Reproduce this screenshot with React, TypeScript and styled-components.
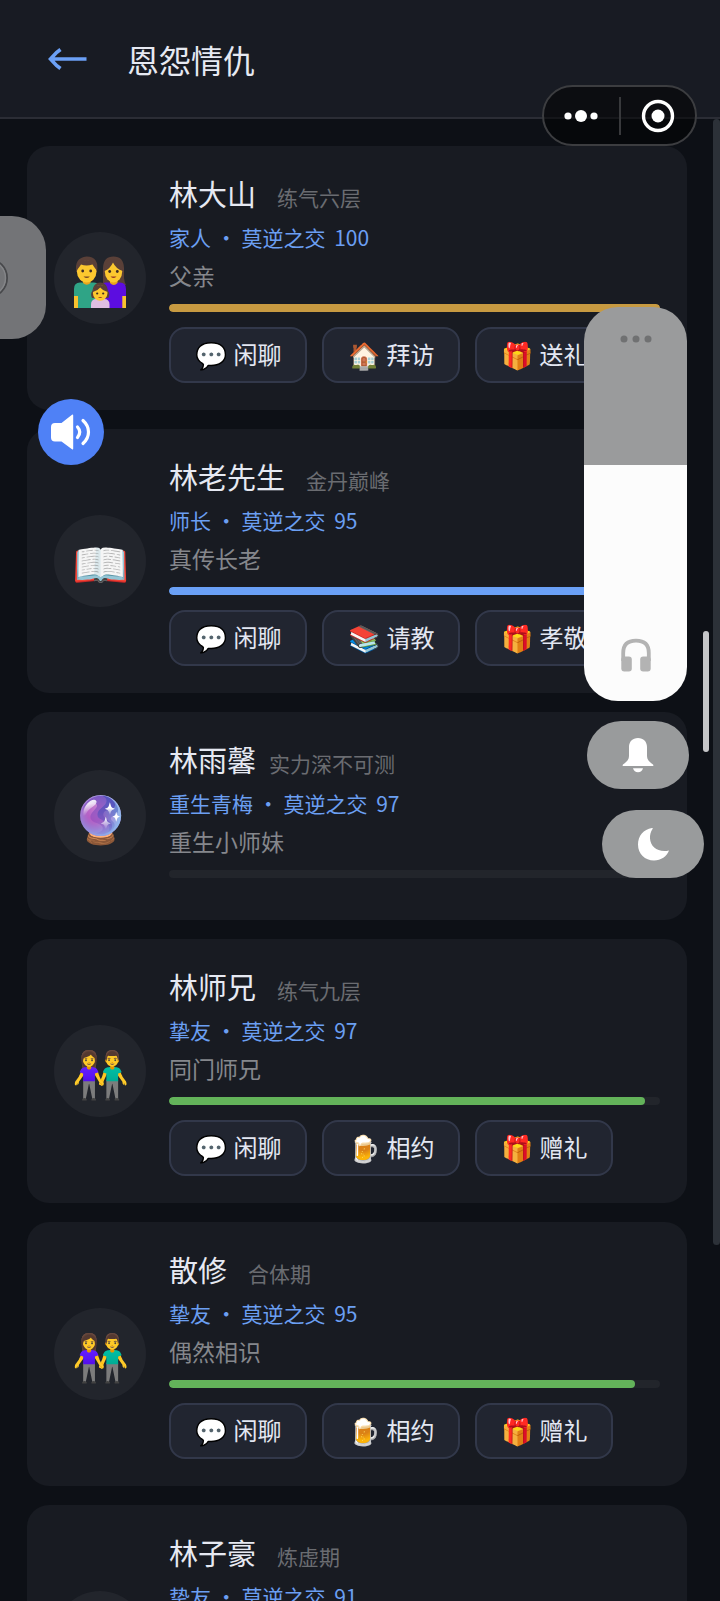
import React, { useState } from "react";
import styled, { createGlobalStyle } from "styled-components";

const GlobalStyle = createGlobalStyle`
  * { box-sizing: border-box; }
  body {
    margin: 0;
    background: #0d1016;
    font-family: "Noto Sans CJK SC", "Noto Sans", sans-serif;
  }
  button { font-family: inherit; padding: 0; border: 0; cursor: pointer; }
`;

const Screen = styled.div`
  position: relative;
  display: flex;
  flex-direction: column;
  height: 100vh;
  overflow: hidden;
  background: #0d1016;
  color: #e6e9f2;
`;

const Header = styled.header`
  display: flex;
  align-items: center;
  gap: 39px;
  flex: none;
  height: 119px;
  padding: 0 48px;
  background: #181b23;
  border-bottom: 2px solid #2b2d35;
`;

const BackButton = styled.button`
  display: flex;
  background: none;
`;

const Title = styled.h1`
  margin: 0;
  font-size: 32px;
  line-height: 40px;
  font-weight: 400;
`;

const Body = styled.main`
  display: flex;
  flex: 1;
  min-height: 0;
`;

const List = styled.ul`
  display: flex;
  flex: 1;
  flex-direction: column;
  gap: 19px;
  margin: 0;
  padding: 27px 26px 27px 27px;
  list-style: none;
  overflow-y: auto;
  scrollbar-width: none;
`;

const ScrollTrack = styled.div`
  flex: none;
  width: 7px;
`;

const ScrollThumb = styled.div`
  height: 76%;
  border-radius: 4px;
  background: #2c3138;
`;

const Card = styled.li`
  display: flex;
  flex: none;
  align-items: center;
  gap: 23px;
  padding: 27px;
  border-radius: 22px;
  background: #181b22;
`;

const Avatar = styled.div`
  display: flex;
  flex: none;
  align-items: center;
  justify-content: center;
  width: 92px;
  height: 92px;
  border-radius: 50%;
  background: #22252c;
  font-size: 46px;
  line-height: 52px;
`;

const Info = styled.div`
  flex: 1;
  min-width: 0;
`;

const NameRow = styled.div<{ $tight?: boolean }>`
  display: flex;
  align-items: baseline;
  gap: ${(p) => (p.$tight ? 13 : 21)}px;
  height: 44px;
  line-height: 40px;
`;

const Name = styled.h2`
  margin: 0;
  font-size: 29px;
  font-weight: 400;
`;

const Rank = styled.span`
  font-size: 21px;
  color: #6a6c71;
`;

const Relation = styled.p`
  margin: 0;
  font-size: 21px;
  line-height: 40px;
  color: #6b9ff2;
`;

const Score = styled.span`
  margin-left: 4px;
`;

const Role = styled.p`
  margin: 0;
  font-size: 23px;
  line-height: 36px;
  color: #85878c;
`;

const Meter = styled.div`
  height: 8px;
  margin-top: 11px;
  border-radius: 4px;
  background: #22252b;
  overflow: hidden;
`;

const MeterFill = styled.div<{ $color: string }>`
  height: 100%;
  border-radius: 4px;
  background: ${(p) => p.$color};
`;

const Actions = styled.div`
  display: flex;
  gap: 15px;
  margin-top: 15px;
`;

const ActionButton = styled.button`
  display: flex;
  align-items: center;
  justify-content: center;
  gap: 7px;
  width: 138px;
  height: 56px;
  padding-bottom: 2px;
  border: 2px solid #32384a;
  border-radius: 16px;
  background: #212530;
  color: #e3e7f2;
  font-size: 24px;
  line-height: 32px;
  white-space: nowrap;
`;

const ActionIcon = styled.span`
  font-size: 26px;
`;

const Capsule = styled.div`
  position: absolute;
  top: 85px;
  right: 23px;
  display: flex;
  align-items: center;
  width: 155px;
  height: 61px;
  border: 2px solid #3c3d40;
  border-radius: 31px;
  background: rgba(0, 0, 0, 0.5);
`;

const CapsuleButton = styled.button`
  display: flex;
  flex: 1;
  align-items: center;
  justify-content: center;
  height: 100%;
  background: none;
`;

const CapsuleDivider = styled.span`
  width: 2px;
  height: 38px;
  background: #38393c;
`;

const EdgeHandle = styled.button`
  position: absolute;
  top: 216px;
  left: 0;
  width: 46px;
  height: 123px;
  border-radius: 0 34px 34px 0;
  background: #737477;
  overflow: hidden;
`;

const SpeakerButton = styled.button`
  position: absolute;
  top: 399px;
  left: 38px;
  display: flex;
  width: 66px;
  height: 66px;
  border-radius: 50%;
  background: #4f81f6;
`;

const VolumePanel = styled.div`
  position: absolute;
  top: 307px;
  right: 33px;
  display: flex;
  flex-direction: column;
  align-items: center;
  justify-content: space-between;
  width: 103px;
  height: 394px;
  padding: 28px 0 29px;
  border-radius: 34px;
  overflow: hidden;
`;

const VolumeSlider = styled.input`
  position: absolute;
  inset: 0;
  width: 100%;
  height: 100%;
  margin: 0;
  appearance: none;
  writing-mode: vertical-lr;
  direction: rtl;
  &::-webkit-slider-thumb {
    appearance: none;
    width: 1px;
    height: 1px;
  }
`;

const PanelIcon = styled.svg`
  position: relative;
  pointer-events: none;
`;

const PillButton = styled.button<{ $top: number; $right: number }>`
  position: absolute;
  top: ${(p) => p.$top}px;
  right: ${(p) => p.$right}px;
  display: flex;
  align-items: center;
  justify-content: center;
  width: 102px;
  height: 68px;
  border-radius: 34px;
  background: #999b9c;
`;

const PageIndicator = styled.div`
  position: absolute;
  top: 631px;
  right: 11px;
  width: 6px;
  height: 121px;
  border-radius: 3px;
  background: #c5c6c8;
`;

function FamilyIcon() {
  return (
    <svg width="52" height="60" viewBox="0 -8 52 60" role="img" aria-label="家人">
      {/* father */}
      <path d="M0 52V33q0-6.500 6-6.500h14q6 0 6 6.500v19z" fill="#2fa486" />
      <path d="M0 40h4v12H0z" fill="#f9c22e" />
      <path d="M9 21h7.500v6q-3.700 3.500-7.500 0z" fill="#e8a41c" />
      <path d="M2.300 16Q0 2 12.600.6 25.500 1 23 16z" fill="#5a4038" />
      <ellipse cx="12.700" cy="15.500" rx="9.800" ry="11" fill="#fcc82f" />
      <path d="M3 14Q2 4 12.700 4 23.300 4 22.400 14 20 11 18.500 8.500q-6 2-11.500 0Q5.500 11 3 14z" fill="#5a4038" />
      <circle cx="8.700" cy="15" r="1.400" fill="#3e2c26" />
      <circle cx="16.700" cy="15" r="1.400" fill="#3e2c26" />
      <path d="M9.500 20.500q3.200 3 6.400 0z" fill="#7a4a22" />
      {/* mother */}
      <path d="M29 26V12Q29.500.600 39.500.600 49.500.600 50 12v10q.6 5 2 7H29z" fill="#5a4038" />
      <path d="M26 52V33q0-6.500 6-6.500h14q6 0 6 6.500v19z" fill="#5c0de0" />
      <path d="M48.300 40h3.700v12h-3.700z" fill="#f9c22e" />
      <path d="M36 22h7.500v5q-3.700 4-7.500 0z" fill="#e8a41c" />
      <ellipse cx="39.500" cy="15.500" rx="8.700" ry="11" fill="#fcc82f" />
      <path d="M30.500 15Q30.500 3 39.500 3T48.800 15Q42 13 39 6.500 36 13 30.500 15z" fill="#5a4038" />
      <circle cx="35.700" cy="15.500" r="1.400" fill="#3e2c26" />
      <circle cx="43.300" cy="15.500" r="1.400" fill="#3e2c26" />
      <path d="M36.500 20.500q3 3 6 0z" fill="#9a3a22" />
      {/* child */}
      <path d="M17 52v-3.500Q17 43 22.500 43h7.500q5.500 0 5.500 5.500V52z" fill="#dfbfe2" />
      <path d="M18 42q-2-4 .3-7Q19.500 26.500 26.300 26.500T34 35q2.500 3 .3 7z" fill="#5a4038" />
      <ellipse cx="26.200" cy="37" rx="7.300" ry="7.700" fill="#fcc82f" />
      <path d="M18.800 36Q19 29 26.200 29T33.600 36Q29 35 26.200 31.500 23.500 35 18.800 36z" fill="#5a4038" />
      <circle cx="23.200" cy="37.500" r="1.100" fill="#3e2c26" />
      <circle cx="29.200" cy="37.500" r="1.100" fill="#3e2c26" />
      <path d="M24 41q2.200 2 4.400 0z" fill="#9a3a22" />
    </svg>
  );
}

type Person = {
  name: string;
  rank: string;
  tight?: boolean;
  relation: string;
  score: number;
  role: string;
  avatar: React.ReactNode;
  color: string;
  progress: number;
  actions: [string, string][];
};

const friendActions: [string, string][] = [
  ["💬", "闲聊"],
  ["🍺", "相约"],
  ["🎁", "赠礼"],
];

const people: Person[] = [
  {
    name: "林大山", rank: "练气六层", relation: "家人", score: 100, role: "父亲",
    avatar: <FamilyIcon />, color: "#c79a41", progress: 100,
    actions: [["💬", "闲聊"], ["🏠", "拜访"], ["🎁", "送礼"]],
  },
  {
    name: "林老先生", rank: "金丹巅峰", relation: "师长", score: 95, role: "真传长老",
    avatar: "📖", color: "#6aa0f6", progress: 95,
    actions: [["💬", "闲聊"], ["📚", "请教"], ["🎁", "孝敬"]],
  },
  {
    name: "林雨馨", rank: "实力深不可测", tight: true, relation: "重生青梅", score: 97, role: "重生小师妹",
    avatar: "🔮", color: "transparent", progress: 0, actions: [],
  },
  {
    name: "林师兄", rank: "练气九层", relation: "挚友", score: 97, role: "同门师兄",
    avatar: "👫", color: "#63b35a", progress: 97, actions: friendActions,
  },
  {
    name: "散修", rank: "合体期", relation: "挚友", score: 95, role: "偶然相识",
    avatar: "👫", color: "#63b35a", progress: 95, actions: friendActions,
  },
  {
    name: "林子豪", rank: "炼虚期", relation: "挚友", score: 91, role: "同门师弟",
    avatar: "👫", color: "#63b35a", progress: 91, actions: friendActions,
  },
];

function PersonCard({ person }: { person: Person }) {
  return (
    <Card>
      <Avatar>{person.avatar}</Avatar>
      <Info>
        <NameRow $tight={person.tight}>
          <Name>{person.name}</Name>
          <Rank>{person.rank}</Rank>
        </NameRow>
        <Relation>
          {person.relation} ・ 莫逆之交 <Score>{person.score}</Score>
        </Relation>
        <Role>{person.role}</Role>
        <Meter>
          <MeterFill $color={person.color} style={{ width: `${person.progress}%` }} />
        </Meter>
        <Actions>
          {person.actions.map(([icon, label]) => (
            <ActionButton key={label} type="button">
              <ActionIcon>{icon}</ActionIcon>
              <span>{label}</span>
            </ActionButton>
          ))}
        </Actions>
      </Info>
    </Card>
  );
}

export default function App() {
  const [volume, setVolume] = useState(60);
  return (
    <Screen>
      <GlobalStyle />
      <Header>
        <BackButton type="button" aria-label="返回">
          <svg width="40" height="24" viewBox="0 0 40 24" fill="none" stroke="#6ba0f6" strokeWidth="3.6">
            <path d="M2 12H38.5M12.5 2.5 8.500 5.500 2.500 12 8.500 18.500 12.500 21.500" />
          </svg>
        </BackButton>
        <Title>恩怨情仇</Title>
      </Header>
      <Body>
        <List>
          {people.map((p) => (
            <PersonCard key={p.name} person={p} />
          ))}
        </List>
        <ScrollTrack>
          <ScrollThumb />
        </ScrollTrack>
      </Body>

      <Capsule>
        <CapsuleButton type="button" aria-label="更多">
          <svg width="34" height="14" viewBox="0 0 34 14" fill="#fff">
            <circle cx="4" cy="7" r="3.6" />
            <circle cx="17" cy="7" r="6" />
            <circle cx="30" cy="7" r="3.6" />
          </svg>
        </CapsuleButton>
        <CapsuleDivider />
        <CapsuleButton type="button" aria-label="关闭">
          <svg width="34" height="34" viewBox="0 0 34 34">
            <circle cx="17" cy="17" r="14.5" fill="none" stroke="#fff" strokeWidth="3.4" />
            <circle cx="17" cy="17" r="6.5" fill="#fff" />
          </svg>
        </CapsuleButton>
      </Capsule>

      <EdgeHandle type="button" aria-label="展开侧栏">
        <svg width="46" height="123" viewBox="0 0 46 123" fill="none" display="block">
          <circle cx="-12" cy="62" r="19" stroke="#47484b" strokeWidth="2" />
          <circle cx="-12" cy="62" r="17.5" stroke="#838487" strokeWidth="1.5" />
        </svg>
      </EdgeHandle>

      <SpeakerButton type="button" aria-label="声音">
        <svg width="66" height="66" viewBox="0 0 66 66" fill="none">
          <path
            d="M17 24h6.500L34 15.800q1.200-.8 1.200.8v32.800q0 1.600-1.200.8L23.500 42.500H17q-4 0-4-4V28q0-4 4-4z"
            fill="#fff"
          />
          <path d="M39.500 28q4.500 5 0 10.500M45 21.500q5.500 5 5.500 11.500T45 44.500" stroke="#fff" strokeWidth="3.2" strokeLinecap="round" />
        </svg>
      </SpeakerButton>

      <VolumePanel>
        <VolumeSlider
          type="range"
          min="0"
          max="100"
          value={volume}
          onChange={(e) => setVolume(Number(e.target.value))}
          aria-label="媒体音量"
          style={{ background: `linear-gradient(to top, #fcfcfc ${volume}%, #9a9b9c ${volume}%)` }}
        />
        <PanelIcon width="34" height="8" viewBox="0 0 34 8" fill="#707172">
          <circle cx="5" cy="4" r="3.5" />
          <circle cx="17" cy="4" r="3.5" />
          <circle cx="29" cy="4" r="3.5" />
        </PanelIcon>
        <PanelIcon width="30" height="34" viewBox="0 0 30 34">
          <path d="M2.200 23V15Q2.200 2.700 15 2.700T27.800 15v8" fill="none" stroke="#b3b3b3" strokeWidth="3.800" />
          <rect x="0.300" y="18.500" width="10.500" height="15" rx="3" fill="#b3b3b3" />
          <rect x="19.200" y="18.500" width="10.500" height="15" rx="3" fill="#b3b3b3" />
        </PanelIcon>
      </VolumePanel>

      <PillButton type="button" aria-label="通知" $top={721} $right={31}>
        <svg width="34" height="36" viewBox="0 0 34 36" fill="#fff">
          <path d="M17 1c-5.500 0-9 3.800-9 9v9c0 3.500-2 5.500-6 8.600Q1 29 2.500 29h29Q33 29 32 27.600C28 24.500 26 22.500 26 19v-9c0-5.200-3.500-9-9-9z" />
          <path d="M12 31.200h10q-1.200 4-5 4t-5-4z" />
        </svg>
      </PillButton>
      <PillButton type="button" aria-label="勿扰" $top={810} $right={16}>
        <svg width="34" height="36" viewBox="0 0 34 36" fill="#fff">
          <path d="M16 2C7.500 3.200 2 10 2 18.500 2 28 9 34.500 18 34.500c7 0 13-4.200 15-10C22.500 27 14.500 21 14 12.500c-.2-3.500.6-7 2.700-9.800Q17 1.800 16 2z" />
        </svg>
      </PillButton>
      <PageIndicator />
    </Screen>
  );
}
